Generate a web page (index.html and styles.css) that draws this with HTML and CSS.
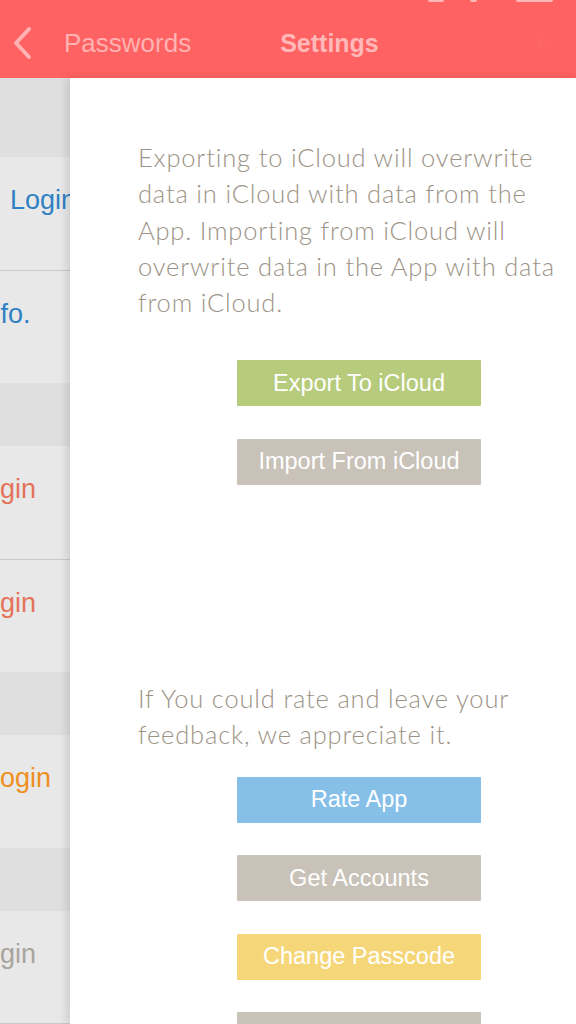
FILE: index.html
```html
<!DOCTYPE html>
<html lang="en">
<head>
  <meta charset="UTF-8" />
  <meta name="viewport" content="width=device-width, initial-scale=1" />
  <title>Settings</title>
  <link rel="stylesheet" href="styles.css">
</head>
<body>
  <header class="nav">
    <div class="status">
      <span class="dot-a"></span>
      <span class="dot-b"></span>
      <span class="battery"></span>
    </div>
    <a class="back" href="#">
      <svg width="22" height="34" viewBox="0 0 22 34">
        <path d="M18 3 L5 17 L18 31" fill="none" stroke="currentColor" stroke-width="4" stroke-linecap="round" stroke-linejoin="round"/>
      </svg>
      <span>Passwords</span>
    </a>
    <h1>Settings</h1>
    <span class="plus">+</span>
  </header>

  <div class="layout">
    <aside class="list">
      <div class="group first"></div>
      <div class="row blue"><span class="title at-10">Login</span></div>
      <div class="row blue"><span class="title at-in">Info.</span></div>
      <div class="group"></div>
      <div class="row red"><span class="title at-lo">Login</span></div>
      <div class="row red"><span class="title at-lo">Login</span></div>
      <div class="group"></div>
      <div class="row orange last"><span class="title at-l">Login</span></div>
      <div class="group"></div>
      <div class="row grey"><span class="title at-lo">Login</span></div>
      <div class="group"></div>
    </aside>

    <main class="settings">
      <p class="note">Exporting to iCloud will overwrite<br>data in iCloud with data from the<br>App. Importing from iCloud will<br>overwrite data in the App with data<br>from iCloud.</p>
      <div class="actions">
        <button class="btn green">Export To iCloud</button>
        <button class="btn stone">Import From iCloud</button>
      </div>

      <p class="note feedback">If You could rate and leave your<br>feedback, we appreciate it.</p>
      <div class="actions tight">
        <button class="btn blue">Rate App</button>
        <button class="btn stone">Get Accounts</button>
        <button class="btn yellow">Change Passcode</button>
        <button class="btn stone">Remove Ads</button>
      </div>
    </main>
  </div>
</body>
</html>
```

FILE: styles.css
```css
html, body {
  margin: 0;
  height: 100%;
  overflow: hidden;
}
body {
  font-family: 'Liberation Sans', Arial, sans-serif;
  background: #fff;
}

/* top bar */
.nav {
  position: relative;
  height: 78px;
  background: #ff6262;
  display: flex;
  align-items: center;
  box-sizing: border-box;
  padding-top: 8px;
}
.status span {
  position: absolute;
  top: 0;
  height: 2px;
  background: rgba(255, 255, 255, 0.55);
  border-radius: 0 0 2px 2px;
}
.status .dot-a { left: 428px; width: 16px; }
.status .dot-b { left: 470px; width: 7px; }
.status .battery { left: 516px; width: 37px; }

.back {
  display: flex;
  align-items: center;
  text-decoration: none;
  color: #ffb2b2;
  padding-left: 11px;
}
.back svg {
  margin-right: 31px;
}
.back span {
  font-size: 26px;
}
.nav h1 {
  margin: 0 0 0 89px;
  font-size: 25px;
  font-weight: bold;
  color: #ffb9b9;
}
.plus {
  margin-left: auto;
  margin-right: 26px;
  font-size: 30px;
  color: rgba(255, 255, 255, 0.04);
}

/* layout */
.layout {
  display: flex;
  height: calc(100% - 78px);
}

/* list behind the settings panel */
.list {
  width: 70px;
  flex: none;
  overflow: hidden;
  background: #e8e8e8;
}
.group {
  height: 63px;
  background: #dfdfdf;
}
.group.first {
  height: 79px;
}
.row {
  height: 113px;
  box-sizing: border-box;
  padding-top: 27px;
  white-space: nowrap;
  font-size: 27px;
  line-height: 32px;
}
.row + .row {
  border-top: 1px solid #c9c9c9;
}
.row.grey {
  border-bottom: 1px solid #c9c9c9;
}
.title {
  display: inline-block;
}
.at-10 { margin-left: 10px; }
.at-in { margin-left: -22px; }
.at-lo { margin-left: -30px; }
.at-l  { margin-left: -15px; }

.row.blue   { color: #3081c3; }
.row.red    { color: #e4735a; }
.row.orange { color: #ef8f22; }
.row.grey   { color: #a8a49e; }

/* settings panel */
.settings {
  flex: 1;
  background: #fff;
  box-shadow: -3px 0 9px rgba(0, 0, 0, 0.13);
  position: relative;
  padding: 61px 0 0 68px;
  min-width: 0;
}
.note {
  margin: 0;
  width: 460px;
  font-family: Lato, 'Open Sans', sans-serif;
  font-weight: 300;
  font-size: 25.5px;
  letter-spacing: 0.82px;
  line-height: 36.3px;
  color: #9c9386;
  white-space: nowrap;
}
.feedback {
  margin-top: 195px;
}
.actions {
  width: 442px;
  display: flex;
  flex-direction: column;
  align-items: center;
  gap: 32.5px;
  margin-top: 40px;
}
.actions.tight {
  margin-top: 24px;
}
.btn {
  width: 244px;
  height: 46px;
  border: none;
  border-radius: 1px;
  padding: 0;
  font-family: 'Liberation Sans', Arial, sans-serif;
  font-size: 23.5px;
  color: #fff;
  cursor: pointer;
  flex: none;
}
.btn.green  { background: #b7cb7c; }
.btn.stone  { background: #c8c2b8; }
.btn.blue   { background: #86bfe8; }
.btn.yellow { background: #f5d77a; }
```
